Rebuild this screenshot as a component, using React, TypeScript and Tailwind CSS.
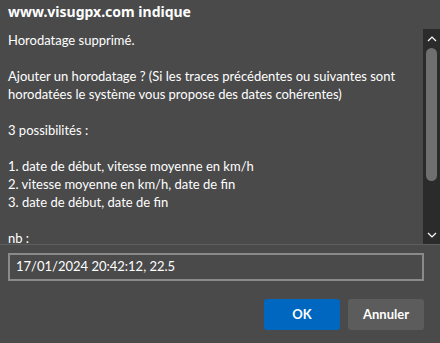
import React from 'react';

const lines = [
    "Horodatage supprimé.",
    "",
    "Ajouter un horodatage ? (Si les traces précédentes ou suivantes sont",
    "horodatées le système vous propose des dates cohérentes)",
    "",
    "3 possibilités :",
    "",
    "1. date de début, vitesse moyenne en km/h",
    "2. vitesse moyenne en km/h, date de fin",
    "3. date de début, date de fin",
    "",
    "nb :",
];

const App = () => {
    return (
        <div className="w-[440px] h-[343px] bg-[#4a4a4a] text-white overflow-hidden" style={{ fontFamily: 'Lato, "Noto Sans", sans-serif' }}>
            <div className="h-[29px] px-2 pt-[3px] text-[14px] leading-[18px] font-bold" style={{ fontFamily: '"Noto Sans", sans-serif' }}>www.visugpx.com indique</div>
            <div className="flex h-[215px]">
                <div className="flex-1 overflow-hidden pl-2 pr-1 pt-[2px] text-[13px] leading-[18px] whitespace-nowrap">
                    {lines.map((line, i) => (
                        <p key={i} className="min-h-[18px]">{line}</p>
                    ))}
                </div>
                <div className="w-[17px] bg-[#2b2b2b] flex flex-col items-center">
                    <svg width="10" height="6" viewBox="0 0 10 6" className="mt-[7px]">
                        <path d="M1 5 L5 1 L9 5" stroke="#ffffff" strokeWidth="1.2" fill="none" />
                    </svg>
                    <div className="mt-[6px] w-[11px] h-[133px] rounded-full bg-[#6f6f6f]"></div>
                    <div className="flex-1"></div>
                    <svg width="10" height="6" viewBox="0 0 10 6" className="mb-[6px]">
                        <path d="M1 1 L5 5 L9 1" stroke="#ffffff" strokeWidth="1.2" fill="none" />
                    </svg>
                </div>
            </div>
            <div className="h-[1px] bg-[#5e5e5e]"></div>
            <div className="px-2 pt-2">
                <div className="h-[28px] w-[416px] border-[2px] border-[#8a8a8a] flex items-center px-[6px] text-[13px]">
                    17/01/2024 20:42:12, 22.5
                </div>
            </div>
            <div className="flex justify-end gap-2 pr-4 pt-[18px]">
                <button className="w-[76px] h-[31px] rounded-[3px] bg-[#0067c0] text-[13px] font-bold text-white">OK</button>
                <button className="w-[76px] h-[31px] rounded-[3px] bg-[#5c5c5c] text-[13px] font-bold text-white">Annuler</button>
            </div>
        </div>
    );
};

export default App;
